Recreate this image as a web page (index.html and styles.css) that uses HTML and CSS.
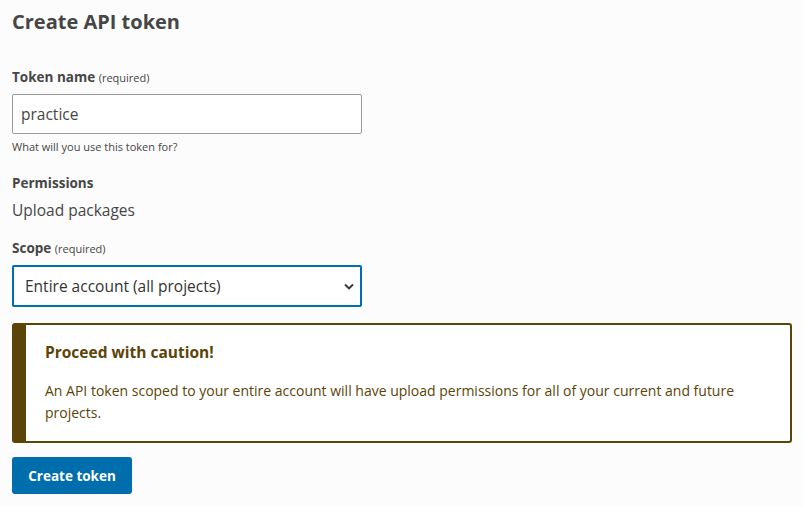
FILE: index.html
```html
<!DOCTYPE html>
<html>
<head>
<meta charset="utf-8">
<link rel="stylesheet" href="styles.css">
</head>
<body>
<main class="page">
  <h1 class="title">Create API token</h1>
  <form class="form">
    <div class="field">
      <label class="label">Token name <span class="req">(required)</span></label>
      <input class="input" type="text" value="practice">
      <p class="help">What will you use this token for?</p>
    </div>
    <div class="field perms">
      <div class="label">Permissions</div>
      <p class="perm-value">Upload packages</p>
    </div>
    <div class="field scope">
      <label class="label">Scope <span class="req">(required)</span></label>
      <div class="select">
        <span>Entire account (all projects)</span>
        <svg class="chev" width="10" height="7" viewBox="0 0 10 7"><path d="M1 1.5 L5 5.5 L9 1.5" fill="none" stroke="#333" stroke-width="1.8"/></svg>
      </div>
    </div>
    <div class="callout">
      <h3 class="callout-title">Proceed with caution!</h3>
      <p class="callout-text">An API token scoped to your entire account will have upload permissions for all of your current and future projects.</p>
    </div>
    <button class="btn" type="button">Create token</button>
  </form>
</main>
</body>
</html>
```
FILE: styles.css
```css
html, body {
  margin: 0;
  padding: 0;
  background: #fcfcfc;
}
body {
  font-family: "Open Sans", "Noto Sans", sans-serif;
  color: #464646;
}
.page {
  padding: 8px 12px 0 12px;
}
.title {
  margin: 0;
  font-size: 20px;
  font-weight: 700;
  line-height: 28px;
  color: #464646;
}
.form {
  margin-top: 32px;
  display: flex;
  flex-direction: column;
}
.field {
  display: flex;
  flex-direction: column;
}
.label {
  font-size: 13.5px;
  font-weight: 700;
  line-height: 18px;
  color: #464646;
}
.req {
  font-size: 11px;
  font-weight: 400;
}
.input {
  margin-top: 7px;
  width: 350px;
  height: 40px;
  box-sizing: border-box;
  border: 1px solid #999;
  border-radius: 2px;
  background: #fff;
  padding: 0 8px;
  font-family: inherit;
  font-size: 15.5px;
  color: #464646;
}
.help {
  margin: 5px 0 0;
  font-size: 11px;
  line-height: 16px;
  color: #464646;
}
.perms {
  margin-top: 19px;
}
.perm-value {
  margin: 8px 0 0;
  font-size: 15.5px;
  line-height: 20px;
}
.scope {
  margin-top: 19px;
}
.select {
  margin-top: 7px;
  width: 350px;
  height: 42px;
  box-sizing: border-box;
  border: 2px solid #006dad;
  border-radius: 2px;
  background: #fff;
  display: flex;
  align-items: center;
  justify-content: space-between;
  padding: 0 6px 0 11px;
  font-size: 15.5px;
  color: #333;
}
.chev {
  margin-top: 1px;
}
.callout {
  margin-top: 16px;
  width: 780px;
  box-sizing: border-box;
  border: 2px solid #5b4408;
  border-left-width: 14px;
  border-radius: 3px;
  background: #fff;
  padding: 16px 18px 17px 19px;
  color: #5b4408;
}
.callout-title {
  margin: 0;
  font-size: 15.5px;
  font-weight: 700;
  line-height: 22px;
}
.callout-text {
  margin: 17px 0 0;
  font-size: 14px;
  line-height: 22px;
}
.btn {
  margin-top: 14px;
  align-self: flex-start;
  width: 120px;
  height: 37px;
  border: none;
  border-radius: 3px;
  background: #006dad;
  color: #fff;
  font-family: inherit;
  font-size: 13.5px;
  font-weight: 700;
}
```
